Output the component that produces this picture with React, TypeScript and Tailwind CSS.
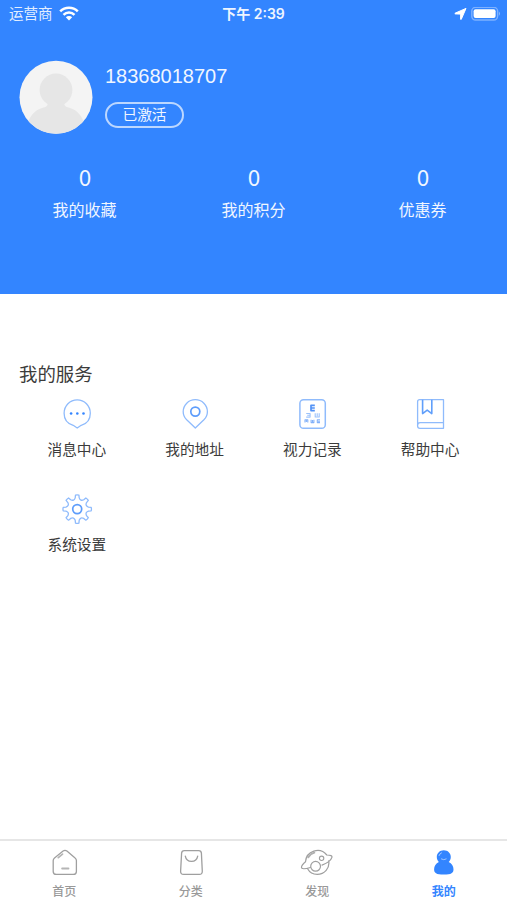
import type { ReactNode } from "react";

const font = "font-[Inter,'Noto_Sans_CJK_SC',sans-serif]";

const stats = [
  { value: 0, label: "我的收藏" },
  { value: 0, label: "我的积分" },
  { value: 0, label: "优惠券" },
];

function ServiceIcon({ children }: { children: ReactNode }) {
  return (
    <svg width="32" height="32" viewBox="0 0 32 32" fill="none" stroke="#8fbbfc" strokeWidth="1.3" strokeLinejoin="round">
      {children}
    </svg>
  );
}

function TabIcon({ children }: { children: ReactNode }) {
  return (
    <svg width="34" height="28" viewBox="0 0 34 28" fill="none" stroke="#9f9f9f" strokeWidth="1.3" strokeLinecap="round" strokeLinejoin="round">
      {children}
    </svg>
  );
}

// eight teeth, each one 45 degrees further round
const gearPath = Array.from({ length: 8 }, (_, i) => {
  const point = (r: number, deg: number) => {
    const a = ((i * 45 + deg - 90) * Math.PI) / 180;
    return `${(16.2 + r * Math.cos(a)).toFixed(2)} ${(16.1 + r * Math.sin(a)).toFixed(2)}`;
  };
  return `${i ? "L" : "M"}${point(11.4, -10)} L${point(14.1, -7)} Q${point(14.5, 0)} ${point(14.1, 7)} L${point(11.4, 10)} Q${point(8.4, 22.5)} ${point(11.4, 35)}`;
}).join(" ") + " Z";

const services = [
  {
    label: "消息中心",
    icon: (
      <ServiceIcon>
        <path d="M16.2 30 12.2 27.3C6.6 25.7 3.1 21 3.1 15.2a13.1 13.4 0 0 1 26.2 0c0 5.8-3.5 10.5-9.1 12.1Z" />
        <g fill="#3385ff" stroke="none">
          <circle cx="10.1" cy="15.5" r="1.3" />
          <circle cx="16.3" cy="15.5" r="1.3" />
          <circle cx="22.5" cy="15.5" r="1.3" />
        </g>
      </ServiceIcon>
    ),
  },
  {
    label: "我的地址",
    icon: (
      <ServiceIcon>
        <path d="M16.3 30 7.7 21.8C5.3 19.4 4.2 16.9 4.2 13.7a12.1 12 0 0 1 24.2 0c0 3.2-1.1 5.7-3.5 8.1Z" />
        <circle cx="16.3" cy="13.6" r="4.5" stroke="#5e9dfb" strokeWidth="1.7" />
      </ServiceIcon>
    ),
  },
  {
    label: "视力记录",
    icon: (
      <ServiceIcon>
        <rect x="3.9" y="1.7" width="25.4" height="28.6" rx="3.6" strokeWidth="1.5" />
        <path d="M18.8 7.3H15V12.6H18.8M15 10H18.8" stroke="#5292f6" strokeWidth="1.7" />
        <path d="M10.2 15.5h3.9v3.6h-3.9M11.2 17.3h3M19.2 15.3v3.7h4v-3.7M21.2 15.3v3" stroke="#9cc2fb" strokeWidth="1.1" />
        <path d="M9 24.6v-2.8h2.8v2.8M10.4 22v2M15.1 21.8v2.8h2.8v-2.8M16.5 22v2M24 21.8h-2.7v2.8H24M22 23.2h2" stroke="#82b1f9" strokeWidth="1.1" />
      </ServiceIcon>
    ),
  },
  {
    label: "帮助中心",
    icon: (
      <ServiceIcon>
        <path d="M5.7 1.7h23.8v28.6H5.9q-2.3 0-2.3-2.3V3.8q0-2.1 2.1-2.1ZM3.7 27.1q0-2.5 2.5-2.5h23.3" />
        <path d="M8.6 1.7v13.9l4.6-3.5 4.6 3.5V1.7" stroke="#609ffb" strokeWidth="1.6" />
      </ServiceIcon>
    ),
  },
  {
    label: "系统设置",
    icon: (
      <ServiceIcon>
        <path d={gearPath} />
        <circle cx="16.2" cy="16.1" r="4.5" stroke="#5e9dfb" strokeWidth="1.7" />
      </ServiceIcon>
    ),
  },
];

const tabs = [
  {
    label: "首页",
    icon: (
      <TabIcon>
        <path d="M16.1 2.1q1.9-1.4 3.8 0l8.2 6.8q1.3 1 1.3 2.7v10.8q0 3-3.1 3H9.3q-3.1 0-3.1-3V11.6q0-1.7 1.3-2.7Z" />
        <path d="m11.3 8.6 4.2-3.5M15.1 19.5h6.4" stroke="#b5b5b5" strokeWidth="1.8" />
      </TabIcon>
    ),
  },
  {
    label: "分类",
    icon: (
      <TabIcon>
        <path d="M10.3 1.6h14.4q2.5 0 2.7 2.5l.9 18.2q.1 3.1-3 3.1H9.6q-3.1 0-3-3.1L7.6 4.1q.2-2.5 2.7-2.5Z" />
        <path d="M11.3 7.2c1.3 7 11.1 7 12.4 0" />
      </TabIcon>
    ),
  },
  {
    label: "发现",
    icon: (
      <TabIcon>
        <path d="M5.5 12.8A12 12 0 0 1 26.8 6c3.9.1 5.6.8 5.1 2.4-.6 2-3.8 5.4-9.9 7.7M5.5 12.8C2 15.9.9 18 1.8 19.1c1 1.2 5 .4 8.6-.6M28.7 11.8c1.3 7.4-4.2 13.6-11.5 13.6-4.4 0-7.8-2.3-9.6-5.6" strokeWidth="1.2" />
        <circle cx="15.6" cy="17.3" r="4.9" strokeWidth="1.2" />
        <circle cx="21.6" cy="9.3" r="2.2" strokeWidth="1.1" />
        <path d="M8.2 8.4q2.3-3.7 6.2-4.7" stroke="#b0b0b0" strokeWidth="1.8" />
      </TabIcon>
    ),
  },
  {
    label: "我的",
    active: true,
    icon: (
      <TabIcon>
        <path d="M16.8 1.2c-4 0-7 2.9-7 6.7 0 2 .8 3.8 2.1 5-3 1.5-4.8 4.2-4.8 7.4 0 3.8 2.1 5.3 9.7 5.3s9.7-1.5 9.7-5.3c0-3.2-1.8-5.9-4.8-7.4 1.3-1.2 2.1-3 2.1-5 0-3.8-3-6.7-7-6.7Z" fill="#3385ff" stroke="none" />
        <path d="M12 6.6q.6-2 2.5-2.8M14.4 10q2.4 1.6 4.8 0" stroke="#a9ccff" strokeWidth=".9" />
      </TabIcon>
    ),
  },
];

function StatusBar() {
  return (
    <div className="flex h-7 items-center justify-between text-[14.5px] leading-7">
      <div className="flex w-1/3 items-center gap-[6px] pl-[9px]">
        <span className="text-[#e2eeff]">运营商</span>
        <svg width="20" height="16" viewBox="0 0 20 16" fill="none" stroke="#fff" strokeWidth="2.5">
          <path d="M1.2 5.3a12.4 12.4 0 0 1 17.6 0M4.5 8.8a7.8 7.8 0 0 1 11 0" />
          <path d="m10 14.6-3.2-3.3a4.5 4.5 0 0 1 6.4 0Z" fill="#fff" stroke="none" />
        </svg>
      </div>
      <div className="text-center text-[14px] font-semibold text-[#eef5ff]">下午 2:39</div>
      <div className="flex w-1/3 items-center justify-end gap-1 pr-1.5">
        <svg width="13" height="12" viewBox="0 0 13 12" fill="#fff">
          <path d="M12 .4 7.3 11.2q-.4.8-.7 0V6.1l-5.3-.2q-1-.3 0-.8Z" stroke="#fff" strokeWidth="1" strokeLinejoin="round" />
        </svg>
        <svg width="30" height="14" viewBox="0 0 30 14">
          <rect x=".8" y=".3" width="25.8" height="12.7" rx="3.8" fill="none" stroke="#7eb1ff" strokeWidth="1.4" />
          <rect x="2.6" y="2.2" width="22" height="8.9" rx="2" fill="#fff" />
          <path d="M27.9 4.5q2.1 2.2 0 4.5Z" fill="#8dbaff" />
        </svg>
      </div>
    </div>
  );
}

function Avatar() {
  return (
    <svg width="74" height="74" viewBox="0 0 74 74">
      <defs>
        <clipPath id="avatar">
          <circle cx="37" cy="37.3" r="36.5" />
        </clipPath>
      </defs>
      <circle cx="37" cy="37.3" r="36.5" fill="#f4f4f4" />
      <g clipPath="url(#avatar)" fill="#e6e6e6">
        <circle cx="37" cy="30" r="16.4" />
        <path d="M29 42h16c0 4 2 5 6 6 7 2 11 7 14 14v12H9V62c3-7 7-12 14-14 4-1 6-2 6-6Z" />
      </g>
    </svg>
  );
}

export default function App() {
  return (
    <div className={`flex h-[900px] w-full flex-col overflow-hidden bg-white ${font}`}>
      <header className="h-[294px] shrink-0 bg-[#3385ff] text-[#f0f6ff]">
        <StatusBar />
        <div className="flex items-start gap-3 pt-8 pl-[19px]">
          <Avatar />
          <div>
            <div className="mt-1 font-['Liberation_Sans',sans-serif] text-[20px] leading-6">18368018707</div>
            <div className="mt-[14px] flex h-[26px] w-[79px] items-center justify-center rounded-full border-2 border-[#bcd7ff] text-[14.7px] leading-none">
              已激活
            </div>
          </div>
        </div>
        <div className="mt-[28px] grid grid-cols-3 text-center">
          {stats.map((s) => (
            <div key={s.label}>
              <div className="pl-px font-['Noto_Sans_CJK_SC',sans-serif] text-[22.5px] leading-7">{s.value}</div>
              <div className="mt-2 text-[16px] leading-6">{s.label}</div>
            </div>
          ))}
        </div>
      </header>

      <main className="flex-1 pt-[66px] text-[#3b3b3b]">
        <h2 className="pl-[19px] text-[18.4px] leading-7">我的服务</h2>
        <div className="mt-[10px] grid grid-cols-4 gap-y-[31px] px-[18px]">
          {services.map((s) => (
            <div key={s.label} className="flex flex-col items-center">
              {s.icon}
              <div className="mt-2 text-[14.7px] leading-6">{s.label}</div>
            </div>
          ))}
        </div>
      </main>

      <nav className="grid h-[61px] shrink-0 grid-cols-4 border-t-2 border-[#e6e6e6] pl-px">
        {tabs.map((t) => (
          <div key={t.label} className="flex flex-col items-center pt-2">
            {t.icon}
            <div className={t.active ? "mt-[5px] text-[12px] leading-5 font-bold text-[#3385ff]" : "mt-[5px] text-[12px] leading-5 font-medium text-[#999999]"}>
              {t.label}
            </div>
          </div>
        ))}
      </nav>
    </div>
  );
}
